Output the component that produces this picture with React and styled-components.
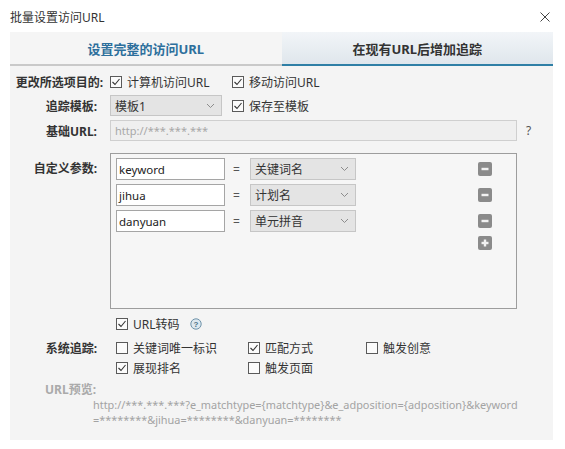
import React from "react";
import styled, { createGlobalStyle } from "styled-components";

const GlobalStyle = createGlobalStyle`
  html, body {
    margin: 0;
    padding: 0;
    background: #ffffff;
  }
  body {
    font-family: "Noto Sans", "Noto Sans CJK SC", sans-serif;
    font-size: 12px;
    color: #333333;
  }
`;

const Dialog = styled.div`
  width: 565px;
  height: 449px;
  background: #ffffff;
  box-sizing: border-box;
  padding: 0 12px 0 10px;
  display: flex;
  flex-direction: column;
`;

const TitleBar = styled.div`
  height: 32px;
  display: flex;
  align-items: center;
  justify-content: space-between;
  font-size: 12px;
  color: #333;
  padding-top: 2px;
  box-sizing: border-box;
`;

const CloseIcon = styled.svg`
  width: 10px;
  height: 10px;
  margin-right: 3px;
`;

const Tabs = styled.div`
  display: grid;
  grid-template-columns: 1fr 1fr;
  height: 34px;
`;

const Tab = styled.div`
  display: flex;
  align-items: center;
  justify-content: center;
  font-size: 13px;
  font-weight: bold;
  color: ${(p) => (p.$active ? "#2d6f9c" : "#333333")};
  background: ${(p) =>
    p.$active ? "#f5f5f5" : "linear-gradient(#f2f5f8, #dfe6ec)"};
  border-bottom: 2px solid ${(p) => (p.$active ? "#c9c9c9" : "#2f7fa6")};
  box-sizing: border-box;
`;

const Panel = styled.div`
  background: #f4f4f4;
  height: 374px;
  padding-top: 7px;
  box-sizing: border-box;
`;

const TopGrid = styled.div`
  display: grid;
  grid-template-columns: 93px 1fr;
  column-gap: 7px;
  grid-template-rows: 18px 21px 21px 164px;
  row-gap: 4px;
  & > :nth-child(7),
  & > :nth-child(8) {
    margin-top: 8px;
  }
`;

const Label = styled.div`
  font-weight: bold;
  color: #333333;
  text-align: right;
  display: flex;
  align-items: ${(p) => (p.$top ? "flex-start" : "center")};
  justify-content: flex-end;
  padding-top: ${(p) => (p.$top ? "6px" : "0")};
  padding-right: ${(p) => (p.$wide ? 0 : 6)}px;
  white-space: nowrap;
`;

const Controls = styled.div`
  display: flex;
  align-items: center;
`;

const CheckWrap = styled.label`
  display: flex;
  align-items: center;
  gap: 5px;
  width: ${(p) => (p.$w ? `${p.$w}px` : "auto")};
  white-space: nowrap;
  color: #333;
`;

const Box = styled.span`
  width: 12px;
  height: 12px;
  box-sizing: border-box;
  border: 1px solid #5a5a5a;
  background: #fbfbfb;
  display: inline-flex;
  align-items: center;
  justify-content: center;
`;

const Check = ({ checked, children, w }) => (
  <CheckWrap $w={w}>
    <Box>
      {checked && (
        <svg width="10" height="10" viewBox="0 0 10 10">
          <polyline
            points="1.5,5 4,7.5 8.5,2"
            fill="none"
            stroke="#333"
            strokeWidth="1.1"
          />
        </svg>
      )}
    </Box>
    {children}
  </CheckWrap>
);

const Select = styled.div`
  width: ${(p) => p.$w}px;
  height: ${(p) => p.$h || 21}px;
  box-sizing: border-box;
  background: #e4e4e4;
  border: 1px solid #c6c6c6;
  display: flex;
  align-items: center;
  justify-content: space-between;
  padding: 0 6px 0 4px;
  color: #333;
  margin-right: ${(p) => p.$mr || 0}px;
`;

const Chevron = () => (
  <svg width="9" height="6" viewBox="0 0 9 6">
    <polyline points="1,1 4.5,4.5 8,1" fill="none" stroke="#8c8c8c" strokeWidth="1" />
  </svg>
);

const UrlInput = styled.div`
  width: 407px;
  height: 21px;
  box-sizing: border-box;
  background: #efefef;
  border: 1px solid #cfcfcf;
  color: #a8a8a8;
  display: flex;
  align-items: center;
  padding-left: 4px;
  font-size: 11px;
`;

const Hint = styled.span`
  margin-left: 9px;
  color: #555;
  font-size: 12px;
`;

const ParamBox = styled.div`
  width: 407px;
  box-sizing: border-box;
  border: 1px solid #9d9d9d;
  background: #f6f6f6;
  padding: 4px 24px 0 5px;
  display: flex;
  flex-direction: column;
  gap: 4px;
`;

const ParamRow = styled.div`
  display: grid;
  grid-template-columns: 109px 25px 106px 1fr 14px;
  align-items: center;
  height: ${(p) => (p.$short ? 14 : 22)}px;
`;

const TextInput = styled.div`
  height: 22px;
  box-sizing: border-box;
  background: #ffffff;
  border: 1px solid #a5a5a5;
  display: flex;
  align-items: center;
  padding-left: 2px;
  color: #222;
  font-size: 11.5px;
`;

const Eq = styled.span`
  text-align: center;
  color: #555;
  margin-left: -2px;
`;

const IconBtn = styled.span`
  grid-column: 5;
  width: 14px;
  height: 14px;
  border-radius: 2px;
  background: #8b8b8b;
  display: flex;
  align-items: center;
  justify-content: center;
`;

const MinusIcon = () => (
  <IconBtn>
    <svg width="10" height="10" viewBox="0 0 10 10">
      <rect x="1.5" y="3.8" width="7" height="2.4" fill="#f2f2f2" />
    </svg>
  </IconBtn>
);

const PlusIcon = () => (
  <IconBtn>
    <svg width="10" height="10" viewBox="0 0 10 10">
      <rect x="1.5" y="3.8" width="7" height="2.4" fill="#f2f2f2" />
      <rect x="3.8" y="1.5" width="2.4" height="7" fill="#f2f2f2" />
    </svg>
  </IconBtn>
);

const BottomGrid = styled.div`
  display: grid;
  grid-template-columns: 87px 1fr;
  column-gap: 19px;
  grid-template-rows: 16px 24px 20px;
  align-items: end;
  margin-top: 7px;
  & > * {
    height: 16px;
    padding-right: 0;
  }
`;

const HelpIcon = () => (
  <svg width="12" height="12" viewBox="0 0 12 12" style={{ marginLeft: 10 }}>
    <circle cx="6" cy="6" r="5.2" fill="#dde8ef" stroke="#6f93aa" strokeWidth="1" />
    <text
      x="6"
      y="8.7"
      textAnchor="middle"
      fontSize="8"
      fontWeight="bold"
      fill="#4b6f86"
      fontFamily="Liberation Sans, sans-serif"
    >
      ?
    </text>
  </svg>
);

const PreviewLabel = styled.div`
  margin: 5px 0 0 35px;
  height: 16px;
  display: flex;
  align-items: center;
  font-weight: bold;
  color: #aaaaaa;
`;

const Preview = styled.div`
  margin-left: 83px;
  color: #a3a3a3;
  font-size: 10.9px;
  line-height: 15px;
  & > span {
    display: block;
    white-space: nowrap;
  }
`;

const params = [
  { key: "keyword", value: "关键词名" },
  { key: "jihua", value: "计划名" },
  { key: "danyuan", value: "单元拼音" },
];

export default function App() {
  return (
    <>
      <GlobalStyle />
      <Dialog>
        <TitleBar>
          <span>批量设置访问URL</span>
          <CloseIcon viewBox="0 0 10 10">
            <line x1="0.5" y1="0.5" x2="9.5" y2="9.5" stroke="#444" strokeWidth="1" />
            <line x1="9.5" y1="0.5" x2="0.5" y2="9.5" stroke="#444" strokeWidth="1" />
          </CloseIcon>
        </TitleBar>

        <Tabs>
          <Tab $active>设置完整的访问URL</Tab>
          <Tab>在现有URL后增加追踪</Tab>
        </Tabs>

        <Panel>
          <TopGrid>
            <Label $wide>更改所选项目的:</Label>
            <Controls>
              <Check checked w={122}>计算机访问URL</Check>
              <Check checked>移动访问URL</Check>
            </Controls>

            <Label>追踪模板:</Label>
            <Controls>
              <Select $w={112} $mr={10}>
                <span>模板1</span>
                <Chevron />
              </Select>
              <Check checked>保存至模板</Check>
            </Controls>

            <Label>基础URL:</Label>
            <Controls>
              <UrlInput>http://***.***.***</UrlInput>
              <Hint>?</Hint>
            </Controls>

            <Label $top>自定义参数:</Label>
            <ParamBox>
              {params.map((p) => (
                <ParamRow key={p.key}>
                  <TextInput>{p.key}</TextInput>
                  <Eq>=</Eq>
                  <Select $w={106} $h={22}>
                    <span>{p.value}</span>
                    <Chevron />
                  </Select>
                  <MinusIcon />
                </ParamRow>
              ))}
              <ParamRow $short>
                <PlusIcon />
              </ParamRow>
            </ParamBox>
          </TopGrid>

          <BottomGrid>
            <span />
            <Controls>
              <Check checked>URL转码</Check>
              <HelpIcon />
            </Controls>

            <Label>系统追踪:</Label>
            <Controls>
              <Check w={132}>关键词唯一标识</Check>
              <Check checked w={118}>匹配方式</Check>
              <Check>触发创意</Check>
            </Controls>

            <span />
            <Controls>
              <Check checked w={132}>展现排名</Check>
              <Check>触发页面</Check>
            </Controls>
          </BottomGrid>

          <PreviewLabel>URL预览:</PreviewLabel>
          <Preview>
            <span>
              http://***.***.***?e_matchtype=&#123;matchtype&#125;&amp;e_adposition=&#123;adposition&#125;&amp;keyword
            </span>
            <span>=********&amp;jihua=********&amp;danyuan=********</span>
          </Preview>
        </Panel>
      </Dialog>
    </>
  );
}
